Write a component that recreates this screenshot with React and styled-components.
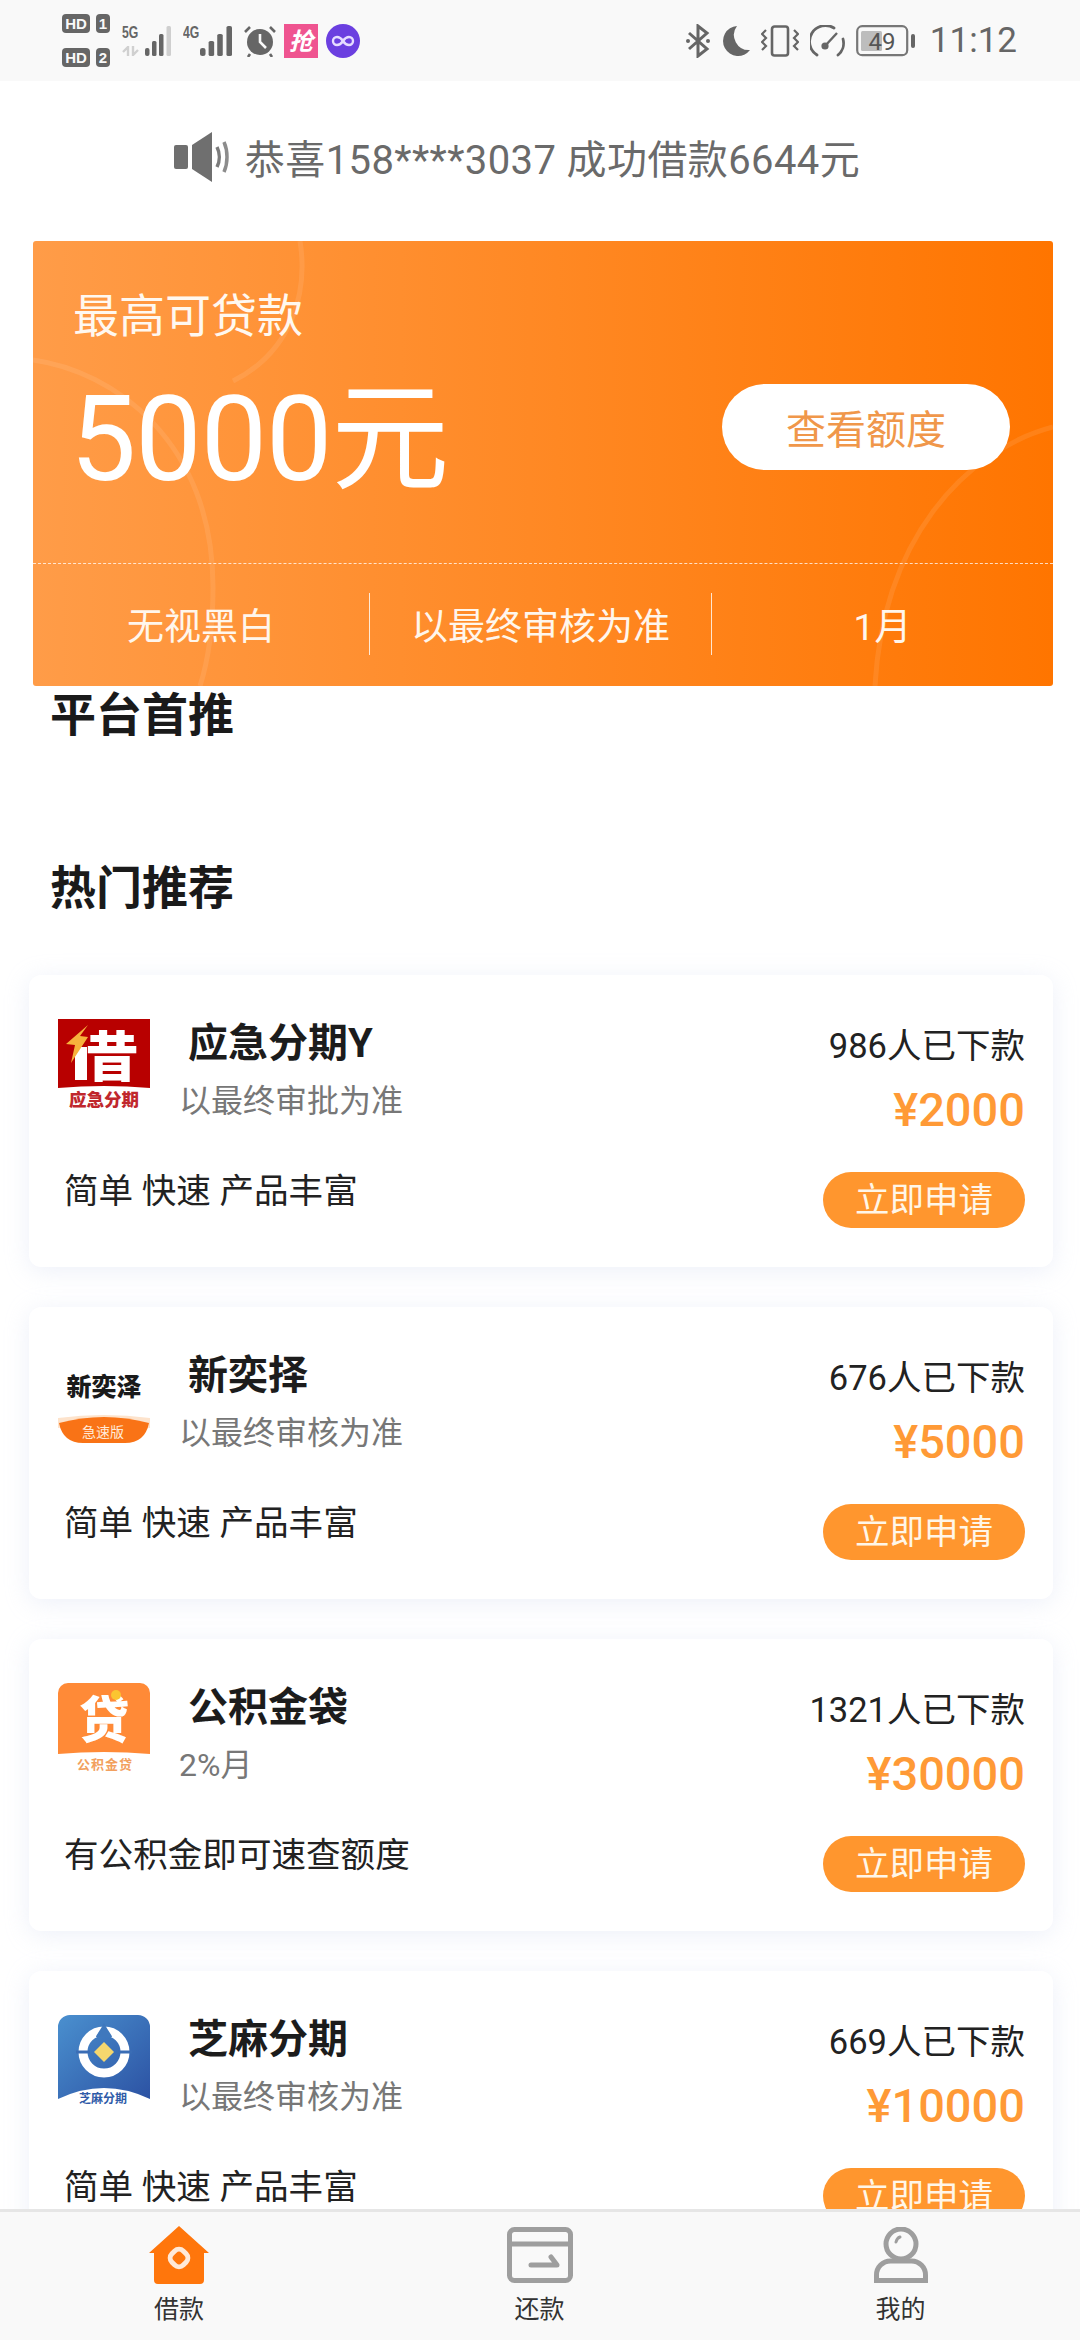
import styled, { createGlobalStyle } from "styled-components";

const Global = createGlobalStyle`
  html, body {
    margin: 0;
    padding: 0;
    background: #fff;
  }
  * {
    box-sizing: border-box;
  }
`;

const cjk = `Roboto, "Noto Sans CJK SC", sans-serif`;

const Page = styled.div`
  width: 1080px;
  height: 2340px;
  display: flex;
  flex-direction: column;
  overflow: hidden;
  font-family: ${cjk};
  background: #fff;
`;

const StatusBar = styled.div`
  height: 81px;
  flex: none;
  background: #f9f9f9;
  display: flex;
  align-items: center;
  justify-content: space-between;
  padding: 0 63px 0 62px;
`;

const StatusGroup = styled.div`
  display: flex;
  align-items: center;
  gap: ${(p) => p.$gap || 8}px;
`;

const SimBadges = styled.div`
  display: grid;
  grid-template-columns: 28px 14px;
  column-gap: 6px;
  row-gap: 15px;
  margin-right: 4px;
`;

const SimBadge = styled.span`
  height: 19px;
  border-radius: 4px;
  background: #666;
  color: #f9f9f9;
  font: 700 15px/19px "Liberation Sans", sans-serif;
  text-align: center;
`;

const SignalBox = styled.div`
  display: flex;
  align-items: flex-start;
  height: 30px;
  margin-right: 4px;
`;

const NetColumn = styled.div`
  display: flex;
  flex-direction: column;
  justify-content: space-between;
  height: 30px;
  width: ${(p) => p.$w}px;
`;

const NetLabel = styled.span`
  font: 700 17px/14px "Liberation Sans", sans-serif;
  color: #666;
  transform: scaleX(0.72);
  transform-origin: left top;
`;

const Clock = styled.span`
  font-size: 35px;
  line-height: 40px;
  color: #666;
  margin-left: 3px;
`;

const Scroll = styled.main`
  flex: 1;
  min-height: 0;
  overflow: hidden;
  padding: 0 27px 0 29px;
`;

const Notice = styled.div`
  height: 160px;
  display: flex;
  align-items: center;
  justify-content: center;
  gap: 13px;
  padding: 0 48px 0 0;
  color: #6a6a6a;
  font-size: 40px;
  letter-spacing: 0.4px;
  margin-top: -4px;
`;

const Hero = styled.section`
  position: relative;
  margin: 4px 0 0 4px;
  height: 445px;
  border-radius: 3px;
  background: linear-gradient(90deg, #ff9c48 0%, #ff7500 100%);
  color: #fff;
  display: flex;
  flex-direction: column;
  overflow: hidden;
`;

const HeroArcs = styled.svg`
  position: absolute;
  inset: 0;
  pointer-events: none;
`;

const HeroTop = styled.div`
  position: relative;
  height: 323px;
  border-bottom: 1px dashed rgba(255, 255, 255, 0.75);
  display: flex;
  justify-content: space-between;
  padding: 45px 43px 0 40px;
`;

const HeroTitle = styled.div`
  font-size: 46px;
  line-height: 60px;
  color: #fff8f0;
`;

const HeroAmount = styled.div`
  font-size: 118px;
  line-height: 136px;
  margin: 26px 0 0 -3px;
  letter-spacing: -1px;
`;

const HeroButton = styled.button`
  width: 288px;
  height: 86px;
  margin-top: 98px;
  border: none;
  border-radius: 43px;
  background: #fff;
  color: #f0974a;
  font-family: inherit;
  font-size: 40px;
`;

const HeroBottom = styled.div`
  position: relative;
  flex: 1;
  display: grid;
  grid-template-columns: 337px 342px 1fr;
  align-items: center;
  padding-bottom: 3px;
`;

const HeroCell = styled.div`
  height: 62px;
  display: flex;
  align-items: center;
  justify-content: center;
  font-size: 37px;
  color: #fff6ec;
  border-right: ${(p) => (p.$last ? "none" : "1px solid rgba(255,255,255,.8)")};
`;

const SectionTitle = styled.h2`
  margin: ${(p) => p.$mt || 0}px 0 0 21px;
  font-size: 46px;
  line-height: 56px;
  font-weight: 700;
  color: #1a1a1a;
`;

const CardList = styled.div`
  display: flex;
  flex-direction: column;
  gap: 40px;
  margin-top: 59px;
`;

const Card = styled.article`
  flex: none;
  height: 292px;
  border-radius: 12px;
  background: #fff;
  box-shadow: 0 4px 24px rgba(190, 200, 235, 0.28);
  display: flex;
  justify-content: space-between;
  padding: 44px 28px 0 29px;
`;

const CardLeft = styled.div`
  display: flex;
  flex-direction: column;
`;

const CardHead = styled.div`
  display: flex;
  gap: 29px;
  height: 92px;
`;

const Logo = styled.svg`
  flex: none;
  width: 92px;
  height: 92px;
`;

const Names = styled.div`
  display: flex;
  flex-direction: column;
`;

const Name = styled.div`
  padding-left: 9px;
  font-size: 40px;
  line-height: 50px;
  font-weight: 700;
  color: #1c1c1c;
`;

const Rate = styled.div`
  font-size: 32px;
  line-height: 44px;
  margin-top: 10px;
  color: #777;
`;

const Desc = styled.div`
  margin: 56px 0 0 6px;
  font-size: 34.6px;
  line-height: 48px;
  color: #222;
`;

const CardRight = styled.div`
  display: flex;
  flex-direction: column;
  align-items: flex-end;
`;

const Count = styled.div`
  font-size: 34.5px;
  line-height: 50px;
  margin-top: 2px;
  color: #222;
`;

const Price = styled.div`
  font-size: 47px;
  line-height: 60px;
  margin-top: 9px;
  font-weight: 500;
  color: #ff9a36;
`;

const ApplyButton = styled.button`
  width: 202px;
  height: 56px;
  margin-top: 32px;
  padding: 0;
  border: none;
  border-radius: 28px;
  background: #ff962e;
  color: #fff6e8;
  font-family: inherit;
  font-size: 34.5px;
  line-height: 56px;
`;

const TabBar = styled.nav`
  flex: none;
  height: 131px;
  background: #f9f9f9;
  border-top: 3px solid #e6e6e6;
  display: grid;
  grid-template-columns: 358px 363px 359px;
`;

const Tab = styled.div`
  display: flex;
  flex-direction: column;
  align-items: center;
  padding-top: 14px;
`;

const TabIconWrap = styled.div`
  height: 58px;
  display: flex;
  align-items: center;
`;

const TabLabel = styled.span`
  font-size: 25px;
  line-height: 34px;
  margin-top: 9px;
  color: #333;
`;

const products = [
  {
    name: "应急分期Y",
    rate: "以最终审批为准",
    desc: "简单 快速 产品丰富",
    count: "986人已下款",
    price: "¥2000",
    logo: "red",
  },
  {
    name: "新奕择",
    rate: "以最终审核为准",
    desc: "简单 快速 产品丰富",
    count: "676人已下款",
    price: "¥5000",
    logo: "pick",
  },
  {
    name: "公积金袋",
    rate: "2%月",
    desc: "有公积金即可速查额度",
    count: "1321人已下款",
    price: "¥30000",
    logo: "fund",
  },
  {
    name: "芝麻分期",
    rate: "以最终审核为准",
    desc: "简单 快速 产品丰富",
    count: "669人已下款",
    price: "¥10000",
    logo: "sesame",
  },
];

const Signal = ({ dim, width }) => (
  <svg width={width} height="30" viewBox="0 0 26 30" preserveAspectRatio="none">
    <rect x="0" y="22" width="4.5" height="8" rx="2" fill="#666" />
    <rect x="7" y="15" width="4.5" height="15" rx="1.5" fill="#666" />
    <rect x="14" y="8" width="4.5" height="22" rx="1.5" fill="#666" />
    <rect x="21.5" y="0" width="4.5" height="30" rx="1.5" fill={dim ? "#cfcfcf" : "#666"} />
  </svg>
);

const DataArrows = () => (
  <svg width="18" height="10" viewBox="0 0 18 10">
    <path d="M6 10V1L1 6M11 0v9l5-5" stroke="#d0d0d0" strokeWidth="2.4" fill="none" />
  </svg>
);

const Alarm = () => (
  <svg width="32" height="32" viewBox="0 0 32 32">
    <circle cx="16" cy="17" r="13" fill="#666" />
    <path d="M16 9v8l6 6" stroke="#f9f9f9" strokeWidth="2.6" fill="none" />
    <path d="M1 7l5-5M31 7l-5-5M6 29l-2 3M26 29l2 3" stroke="#666" strokeWidth="2.6" />
  </svg>
);

const RushIcon = () => (
  <svg width="34" height="34" viewBox="0 0 34 34">
    <rect width="34" height="34" fill="#ef5490" />
    <text x="17" y="26" fontSize="24" fontWeight="700" fontStyle="italic" textAnchor="middle" fill="#fff">
      抢
    </text>
  </svg>
);

const LoopIcon = () => (
  <svg width="34" height="34" viewBox="0 0 34 34">
    <circle cx="17" cy="17" r="17" fill="#6b3fe0" />
    <path
      d="M17 17c-2-3-4-4-6-4a4 4 0 0 0 0 8c2 0 4-1 6-4s4-4 6-4a4 4 0 0 1 0 8c-2 0-4-1-6-4z"
      stroke="#e6dcff"
      strokeWidth="2.4"
      fill="none"
    />
  </svg>
);

const Bluetooth = () => (
  <svg width="24" height="34" viewBox="0 0 24 34">
    <path d="M3 9l18 16-9 7V2l9 7L3 25" stroke="#666" strokeWidth="3" fill="none" />
    <circle cx="2" cy="17" r="2" fill="#666" />
    <circle cx="22" cy="17" r="2" fill="#666" />
  </svg>
);

const Moon = () => (
  <svg width="29" height="32" viewBox="0 0 29 32">
    <path d="M16 1A15 15 0 1 0 29 25 15 15 0 0 1 16 1z" fill="#666" />
  </svg>
);

const Vibrate = () => (
  <svg width="38" height="32" viewBox="0 0 38 32">
    <rect x="11" y="1.5" width="16" height="29" rx="2.5" stroke="#666" strokeWidth="2.6" fill="none" />
    <path d="M5 5L1 9l4 4-4 4 4 4-4 4M33 5l4 4-4 4 4 4-4 4 4 4" stroke="#666" strokeWidth="2.2" fill="none" />
  </svg>
);

const Gauge = () => (
  <svg width="35" height="32" viewBox="0 0 35 32">
    <path d="M7 30A15.5 15.5 0 0 1 24 3" stroke="#666" strokeWidth="2.8" fill="none" strokeLinecap="round" />
    <path d="M33 14a15.5 15.5 0 0 1-5 16" stroke="#666" strokeWidth="2.8" fill="none" strokeLinecap="round" />
    <path d="M15 21l12-13" stroke="#666" strokeWidth="2.4" />
    <circle cx="15" cy="21" r="3.6" fill="#666" />
  </svg>
);

const Battery = () => (
  <svg width="60" height="32" viewBox="0 0 60 32">
    <rect x="1.2" y="1.2" width="50" height="29" rx="5" stroke="#777" strokeWidth="2.2" fill="none" />
    <rect x="5" y="6" width="21" height="20" rx="1.5" fill="#bdbdbd" />
    <rect x="55" y="9" width="4" height="14" rx="2" fill="#666" />
    <text x="26" y="25" fontSize="24" textAnchor="middle" fill="#555" fontFamily="Roboto, sans-serif">
      49
    </text>
  </svg>
);

const Speaker = () => (
  <svg width="58" height="50" viewBox="0 0 58 50">
    <rect x="0" y="13" width="14" height="24" rx="2" fill="#6f6f6f" />
    <path d="M18 13L38 0v50L18 37z" fill="#6f6f6f" />
    <path d="M43 15c3 6 3 14 0 20" stroke="#7b7b7b" strokeWidth="3.5" fill="none" />
    <path d="M50 10c4 9 4 21 0 30" stroke="#8c8c8c" strokeWidth="3.5" fill="none" />
  </svg>
);

const RedLogo = () => (
  <Logo viewBox="0 0 92 92">
    <path d="M0 0h92v69q-46-4-92 0z" fill="#b80000" />
    <text x="54" y="58" fontSize="54" fontWeight="900" textAnchor="middle" fill="#fff">
      昔
    </text>
    <rect x="17" y="28" width="12" height="33" fill="#fff" />
    <path d="M30 6L8 25l9 1-4 18 17-26-8-1z" fill="#f7b23c" />
    <text x="46" y="87" fontSize="17.5" fontWeight="900" textAnchor="middle" fill="#c0272d">
      应急分期
    </text>
  </Logo>
);

const PickLogo = () => (
  <Logo viewBox="0 0 92 92">
    <text x="46" y="45" fontSize="25" fontWeight="900" textAnchor="middle" fill="#1a1a1a" fontFamily="Noto Sans CJK SC">
      新奕泽
    </text>
    <path d="M0 67q46-6 92 0v10q-46-8-92 0z" fill="#fde3cc" />
    <path d="M1 72q45-12 90 0-4 20-24 20H25Q5 92 1 72z" fill="#f97316" />
    <text x="45" y="86" fontSize="14" textAnchor="middle" fill="#ffe9d6">
      急速版
    </text>
  </Logo>
);

const FundLogo = () => (
  <Logo viewBox="0 0 92 92">
    <path d="M10 0h72a10 10 0 0 1 10 10v61q-46-4-92 0V10A10 10 0 0 1 10 0z" fill="#ff8a37" />
    <text x="46" y="55" fontSize="50" fontWeight="900" textAnchor="middle" fill="#fff">
      贷
    </text>
    <circle cx="58" cy="12" r="5" fill="#fbc531" />
    <text x="47" y="86" fontSize="13" fontWeight="700" letterSpacing="1" textAnchor="middle" fill="#f2a05e">
      公积金贷
    </text>
  </Logo>
);

const SesameLogo = () => (
  <Logo viewBox="0 0 92 92">
    <defs>
      <linearGradient id="sesameBg" x1="0" y1="0" x2="1" y2="1">
        <stop offset="0" stopColor="#4a90cf" />
        <stop offset="1" stopColor="#2c52a3" />
      </linearGradient>
    </defs>
    <path d="M12 0h68a12 12 0 0 1 12 12v72q-46-22-92 0V12A12 12 0 0 1 12 0z" fill="url(#sesameBg)" />
    <circle cx="46" cy="37" r="21" stroke="#fff" strokeWidth="9" fill="none" />
    <path d="M46 8c-4 8-8 12-8 14h16c0-2-4-6-8-14z" fill="#3f78bd" />
    <path d="M18 37h14M60 37h14" stroke="#3a6db5" strokeWidth="3" />
    <path d="M46 27l10 10-10 10-10-10z" fill="#f5d76e" />
    <text x="45" y="88" fontSize="12" fontWeight="700" textAnchor="middle" fill="#2f5ba8">
      芝麻分期
    </text>
  </Logo>
);

const logos = {
  red: RedLogo,
  pick: PickLogo,
  fund: FundLogo,
  sesame: SesameLogo,
};

const HomeIcon = () => (
  <svg width="60" height="58" viewBox="0 0 60 58">
    <path d="M30 0l30 27h-5v27a4 4 0 0 1-4 4H9a4 4 0 0 1-4-4V27H0z" fill="#ff760c" />
    <rect x="22" y="24" width="16" height="16" rx="6" transform="rotate(45 30 32)" fill="none" stroke="#ffe9d8" strokeWidth="5" />
  </svg>
);

const RepayIcon = () => (
  <svg width="66" height="56" viewBox="0 0 66 56">
    <rect x="2.5" y="2.5" width="61" height="51" rx="5" fill="none" stroke="#9e9e9e" strokeWidth="5" />
    <path d="M2.5 17h61" stroke="#9e9e9e" strokeWidth="5" />
    <path d="M24 38h26l-6-8" fill="none" stroke="#9e9e9e" strokeWidth="5" strokeLinecap="round" strokeLinejoin="round" />
  </svg>
);

const MineIcon = () => (
  <svg width="54" height="56" viewBox="0 0 54 56">
    <ellipse cx="27" cy="17" rx="15" ry="15" fill="none" stroke="#9e9e9e" strokeWidth="5" />
    <path d="M22 15q1-4 4-5" stroke="#9e9e9e" strokeWidth="3" fill="none" strokeLinecap="round" />
    <path d="M2.500 56V48a14 14 0 0 1 14-14h21a14 14 0 0 1 14 14v8" fill="none" stroke="#9e9e9e" strokeWidth="5" />
    <path d="M0 53.500h54" stroke="#9e9e9e" strokeWidth="5" />
  </svg>
);

const App = () => {
  return (
    <Page>
      <Global />
      <StatusBar>
        <StatusGroup>
          <SimBadges>
            <SimBadge>HD</SimBadge>
            <SimBadge>1</SimBadge>
            <SimBadge>HD</SimBadge>
            <SimBadge>2</SimBadge>
          </SimBadges>
          <SignalBox>
            <NetColumn $w={23}>
              <NetLabel>5G</NetLabel>
              <DataArrows />
            </NetColumn>
            <Signal dim width={26} />
          </SignalBox>
          <SignalBox>
            <NetColumn $w={17}>
              <NetLabel>4G</NetLabel>
            </NetColumn>
            <Signal width={32} />
          </SignalBox>
          <Alarm />
          <RushIcon />
          <LoopIcon />
        </StatusGroup>
        <StatusGroup $gap={11}>
          <Bluetooth />
          <Moon />
          <Vibrate />
          <Gauge />
          <Battery />
          <Clock>11:12</Clock>
        </StatusGroup>
      </StatusBar>

      <Scroll>
        <Notice>
          <Speaker />
          <span>恭喜158****3037 成功借款6644元</span>
        </Notice>

        <Hero>
          <HeroArcs width="1020" height="445" viewBox="0 0 1020 445">
            <g fill="none" stroke="#fff" strokeOpacity="0.09" strokeWidth="5">
              <path d="M267 0c8 50-7 110-67 140" />
              <path d="M0 119c80 11 180 81 180 227 0 44-5 74-13 99" />
              <path d="M1020 186c-90 24-170 114-178 259" />
            </g>
          </HeroArcs>
          <HeroTop>
            <div>
              <HeroTitle>最高可贷款</HeroTitle>
              <HeroAmount>5000元</HeroAmount>
            </div>
            <HeroButton>查看额度</HeroButton>
          </HeroTop>
          <HeroBottom>
            <HeroCell>无视黑白</HeroCell>
            <HeroCell>以最终审核为准</HeroCell>
            <HeroCell $last>1月</HeroCell>
          </HeroBottom>
        </Hero>

        <SectionTitle $mt={1}>平台首推</SectionTitle>
        <SectionTitle $mt={117}>热门推荐</SectionTitle>

        <CardList>
          {products.map((item) => {
            const LogoImage = logos[item.logo];
            return (
              <Card key={item.name}>
                <CardLeft>
                  <CardHead>
                    <LogoImage />
                    <Names>
                      <Name>{item.name}</Name>
                      <Rate>{item.rate}</Rate>
                    </Names>
                  </CardHead>
                  <Desc>{item.desc}</Desc>
                </CardLeft>
                <CardRight>
                  <Count>{item.count}</Count>
                  <Price>{item.price}</Price>
                  <ApplyButton>立即申请</ApplyButton>
                </CardRight>
              </Card>
            );
          })}
        </CardList>
      </Scroll>

      <TabBar>
        <Tab>
          <TabIconWrap>
            <HomeIcon />
          </TabIconWrap>
          <TabLabel>借款</TabLabel>
        </Tab>
        <Tab>
          <TabIconWrap>
            <RepayIcon />
          </TabIconWrap>
          <TabLabel>还款</TabLabel>
        </Tab>
        <Tab>
          <TabIconWrap>
            <MineIcon />
          </TabIconWrap>
          <TabLabel>我的</TabLabel>
        </Tab>
      </TabBar>
    </Page>
  );
};

export default App;
